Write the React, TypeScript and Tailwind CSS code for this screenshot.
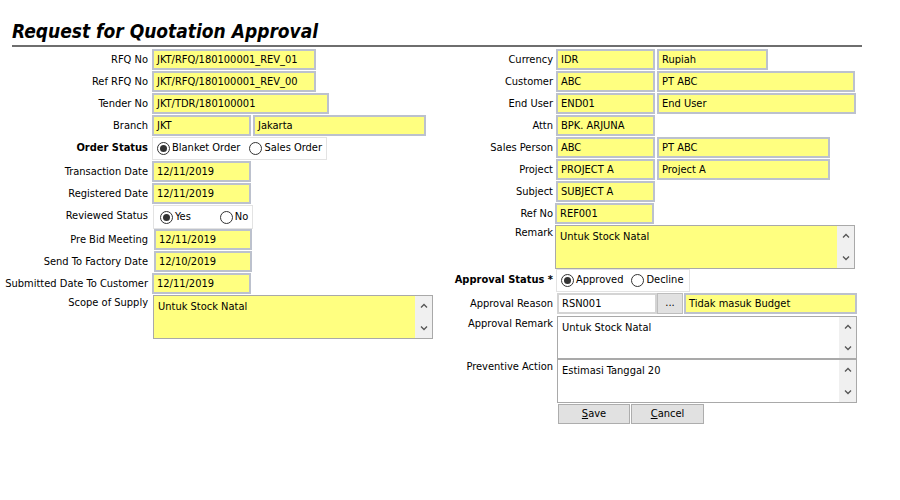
import React from 'react';

const font = { fontFamily: '"DejaVu Sans Condensed", "DejaVu Sans", "Liberation Sans", sans-serif' };

const Field = ({ value, className = '', white = false }: { value: string; className?: string; white?: boolean }) => (
  <div
    className={`h-[21px] shrink-0 border-2 ${white ? 'bg-white border-[#c9ccd4]' : 'bg-[#ffff80] border-[#bcc1cd]'} pl-[3px] pt-[1px] flex items-center text-[11px] text-black whitespace-nowrap overflow-hidden ${className}`}
  >
    {value}
  </div>
);

const Chevron = ({ up }: { up?: boolean }) => (
  <svg width="8" height="5" viewBox="0 0 8 5" className="text-[#555]">
    <polyline
      points={up ? '1,4.5 4,1.5 7,4.5' : '1,0.5 4,3.5 7,0.5'}
      fill="none"
      stroke="currentColor"
      strokeWidth="1.3"
    />
  </svg>
);

const Memo = ({ value, className = '', white = false }: { value: string; className?: string; white?: boolean }) => (
  <div className={`flex shrink-0 border border-[#a9a9a9] ${white ? 'bg-white' : 'bg-[#ffff80]'} ${className}`}>
    <div className="flex-1 pl-[4px] pt-[4px] text-[11px] leading-[13px]">{value}</div>
    <div className="w-[17px] bg-[#f0f0f0] flex flex-col items-center justify-between py-[7px]">
      <Chevron up />
      <Chevron />
    </div>
  </div>
);

const Radio = ({ checked, label }: { checked?: boolean; label: string }) => (
  <div className="flex items-center gap-[2px]">
    <div className="w-[13px] h-[13px] rounded-full border border-[#333] bg-white flex items-center justify-center">
      {checked && <div className="w-[7px] h-[7px] rounded-full bg-[#333]" />}
    </div>
    <span className="text-[11px]">{label}</span>
  </div>
);

const RadioBox = ({ className, children }: { className: string; children: React.ReactNode }) => (
  <div className={`shrink-0 bg-white border border-[#e3e3e3] flex items-center ${className}`}>{children}</div>
);

const LRow = ({ label, bold, top, h = 'h-[22px]', children }: { label: string; bold?: boolean; top?: boolean; h?: string; children: React.ReactNode }) => (
  <div className={`flex ${h} items-start`}>
    <div className={`w-[152px] shrink-0 pr-[4px] text-right text-[11px] whitespace-nowrap ${bold ? 'font-bold' : ''} ${top ? 'leading-[14px] pt-[1px]' : 'leading-[22px]'}`}>
      {label}
    </div>
    <div className="flex gap-[2px]">{children}</div>
  </div>
);

const RRow = ({ label, bold, top, h = 'h-[22px]', children }: { label: string; bold?: boolean; top?: boolean; h?: string; children: React.ReactNode }) => (
  <div className={`flex ${h} items-start`}>
    <div className={`w-[116px] shrink-0 pr-[3px] text-right text-[11px] whitespace-nowrap ${bold ? 'font-bold' : ''} ${top ? 'leading-[14px] pt-[1px]' : 'leading-[22px]'}`}>
      {label}
    </div>
    <div className="flex gap-[2px]">{children}</div>
  </div>
);

export default function App() {
  return (
    <div className="w-[900px] h-[500px] bg-white text-black overflow-hidden" style={font}>
      {/* Title */}
      <div className="ml-[12px] w-[850px] h-[47px] border-b-2 border-[#6e6e6e] flex items-end pb-[3px]">
        <h1 className="text-[19px] leading-[22px] font-bold italic text-black">Request for Quotation Approval</h1>
      </div>

      <div className="flex pt-[2px]">
        {/* Left column */}
        <div className="w-[440px] shrink-0 flex flex-col">
          <LRow label="RFQ No"><Field value="JKT/RFQ/180100001_REV_01" className="w-[164px]" /></LRow>
          <LRow label="Ref RFQ No"><Field value="JKT/RFQ/180100001_REV_00" className="w-[164px]" /></LRow>
          <LRow label="Tender No"><Field value="JKT/TDR/180100001" className="w-[177px]" /></LRow>
          <LRow label="Branch">
            <Field value="JKT" className="w-[99px]" />
            <Field value="Jakarta" className="w-[173px]" />
          </LRow>
          <LRow label="Order Status" bold h="h-[24px]">
            <RadioBox className="w-[175px] h-[23px] pl-[4px] gap-[9px]">
              <Radio checked label="Blanket Order" />
              <Radio label="Sales Order" />
            </RadioBox>
          </LRow>
          <LRow label="Transaction Date"><Field value="12/11/2019" className="w-[99px]" /></LRow>
          <LRow label="Registered Date"><Field value="12/11/2019" className="w-[99px]" /></LRow>
          <LRow label="Reviewed Status" h="h-[24px]">
            <RadioBox className="w-[100px] h-[24px] pl-[6px] gap-[29px] ml-[1px]">
              <Radio checked label="Yes" />
              <Radio label="No" />
            </RadioBox>
          </LRow>
          <LRow label="Pre Bid Meeting"><Field value="12/11/2019" className="w-[98px] ml-[2px]" /></LRow>
          <LRow label="Send To Factory Date"><Field value="12/10/2019" className="w-[98px] ml-[2px]" /></LRow>
          <LRow label="Submitted Date To Customer"><Field value="12/11/2019" className="w-[99px]" /></LRow>
          <LRow label="Scope of Supply" top h="h-[44px]">
            <Memo value="Untuk Stock Natal" className="w-[280px] h-[44px] ml-[1px]" />
          </LRow>
        </div>

        {/* Right column */}
        <div className="flex flex-col">
          <RRow label="Currency">
            <Field value="IDR" className="w-[99px]" />
            <Field value="Rupiah" className="w-[111px]" />
          </RRow>
          <RRow label="Customer">
            <Field value="ABC" className="w-[99px]" />
            <Field value="PT ABC" className="w-[198px]" />
          </RRow>
          <RRow label="End User">
            <Field value="END01" className="w-[99px]" />
            <Field value="End User" className="w-[199px]" />
          </RRow>
          <RRow label="Attn"><Field value="BPK. ARJUNA" className="w-[99px]" /></RRow>
          <RRow label="Sales Person">
            <Field value="ABC" className="w-[99px]" />
            <Field value="PT ABC" className="w-[173px]" />
          </RRow>
          <RRow label="Project">
            <Field value="PROJECT A" className="w-[99px]" />
            <Field value="Project A" className="w-[173px]" />
          </RRow>
          <RRow label="Subject"><Field value="SUBJECT A" className="w-[99px]" /></RRow>
          <RRow label="Ref No"><Field value="REF001" className="w-[99px] -ml-[1px]" /></RRow>
          <RRow label="Remark" top h="h-[44px]">
            <Memo value="Untuk Stock Natal" className="w-[300px] h-[44px] -ml-[1px]" />
          </RRow>
          <RRow label="Approval Status *" bold h="h-[24px]">
            <RadioBox className="w-[134px] h-[23px] pl-[4px] gap-[8px]">
              <Radio checked label="Approved" />
              <Radio label="Decline" />
            </RadioBox>
          </RRow>
          <RRow label="Approval Reason" h="h-[23px]">
            <div className="flex ml-[1px]">
              <Field value="RSN001" white className="w-[100px] border-[#d4d4d4]" />
              <div className="w-[26px] h-[21px] bg-[#e1e1e1] border border-[#bdbdbd] flex items-center justify-center text-[11px] leading-[11px] pb-[2px]">...</div>
              <Field value="Tidak masuk Budget" className="w-[173px] ml-[1px] border-[#a9bcd4]" />
            </div>
          </RRow>
          <RRow label="Approval Remark" top h="h-[43px]">
            <Memo value="Untuk Stock Natal" white className="w-[300px] h-[43px] ml-[1px]" />
          </RRow>
          <RRow label="Preventive Action" top h="h-[45px]">
            <Memo value="Estimasi Tanggal 20" white className="w-[300px] h-[44px] ml-[1px]" />
          </RRow>
          <div className="flex pl-[118px] gap-[1px]">
            <button className="w-[72px] h-[20px] bg-[#e1e1e1] border border-[#adadad] text-[11px] leading-[18px]">
              <span className="underline">S</span>ave
            </button>
            <button className="w-[73px] h-[20px] bg-[#e1e1e1] border border-[#adadad] text-[11px] leading-[18px]">
              <span className="underline">C</span>ancel
            </button>
          </div>
        </div>
      </div>
    </div>
  );
}
